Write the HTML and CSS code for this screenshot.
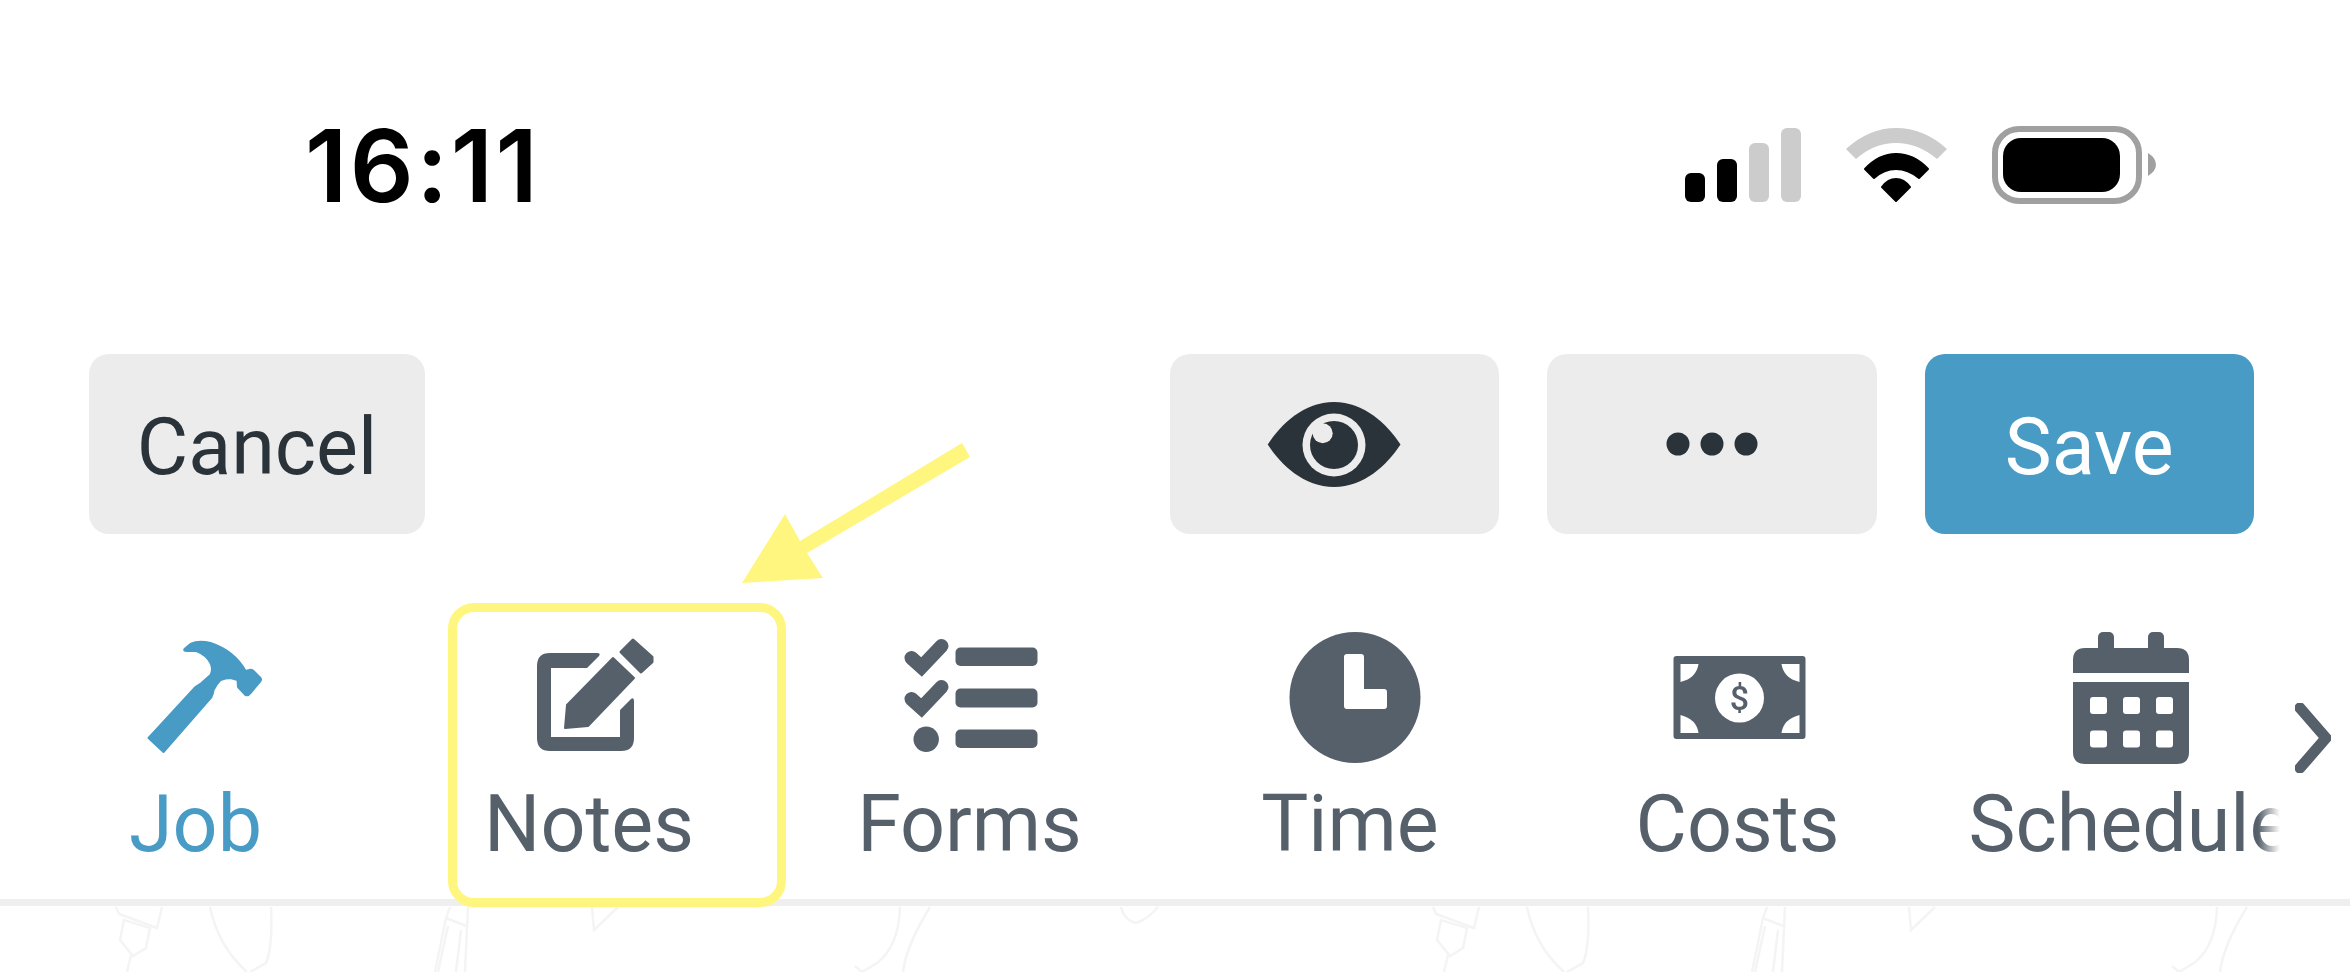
FILE: index.html

```html
<!DOCTYPE html>
<html lang="en">

<head>
    <meta charset="UTF-8">
    <meta name="viewport" content="width=device-width, initial-scale=1.0">
    <title>Job</title>
    <link rel="stylesheet" href="styles.css">
</head>

<body>
    <div id="screen">
        <div class="status">
            <div class="clock">16:11</div>
            <div class="statusIcons">
                <svg width="116" height="76" viewBox="1685 126 116 76">
                    <rect x="1685" y="173" width="20" height="29" rx="6" fill="#000"></rect>
                    <rect x="1717" y="159" width="20" height="43" rx="6" fill="#000"></rect>
                    <rect x="1749" y="143" width="20" height="59" rx="6" fill="#ccc"></rect>
                    <rect x="1781" y="128" width="20" height="74" rx="6" fill="#ccc"></rect>
                </svg>
                <svg width="101" height="76" viewBox="1846 126 101 76">
                    <path d="M1846 149Q1869 128 1896 128Q1924 128 1947 149L1937 159Q1918 143 1896 143Q1874 143 1856 159Z" fill="#ccc"></path>
                    <g fill="#000" stroke="#000" stroke-width="2" stroke-linejoin="round">
                        <path d="M1865 169Q1879 154 1896 154Q1914 154 1928 169L1919 178Q1908 169 1896 169Q1884 169 1874 178Z"></path>
                        <path d="M1882 187Q1888 179 1896 179Q1904 179 1910 187L1896 201Z"></path>
                    </g>
                </svg>
                <svg width="164" height="78" viewBox="1992 126 164 78">
                    <rect x="1995" y="129" width="144" height="72" rx="24" fill="none" stroke="#a0a0a0" stroke-width="6"></rect>
                    <rect x="2003" y="138" width="117" height="54" rx="18" fill="#000"></rect>
                    <path d="M2148 153Q2156 158 2156 164.500Q2156 171 2148 176Z" fill="#a0a0a0"></path>
                </svg>
            </div>
        </div>

        <div class="toolbar">
            <div class="btn btnText btnCancel">Cancel</div>
            <div class="btn">
                <svg width="134" height="85" viewBox="1266 402 134 85">
                    <path fill="#2a3339" d="M1266.700 444.500C1280 424 1303 402 1333 402C1363 402 1386 424 1399.500 444.500C1386 465 1363 487 1333 487C1303 487 1280 465 1266.700 444.500Z"></path>
                    <circle cx="1333" cy="445" r="31.500" fill="#ececec"></circle>
                    <circle cx="1333" cy="445" r="24" fill="#2a3339"></circle>
                    <circle cx="1321.700" cy="433.300" r="10" fill="#ececec"></circle>
                </svg>
            </div>
            <div class="btn">
                <svg width="92" height="24" viewBox="0 0 92 24">
                    <circle cx="12" cy="12" r="11.500" fill="#2a3339"></circle>
                    <circle cx="46" cy="12" r="11.500" fill="#2a3339"></circle>
                    <circle cx="80" cy="12" r="11.500" fill="#2a3339"></circle>
                </svg>
            </div>
            <div class="btn btnText btnSave">Save</div>
        </div>

        <div class="tabBar">
            <div class="tabs">
                <div class="tab active">
                    <svg class="tabIcon" viewBox="95.500 632 200 132">
                        <path fill="#479bc5" stroke="#479bc5" stroke-width="2" stroke-linejoin="round" d="M148 738L163 752L211 697Q213 693 213 690Q216 684 220 680Q225 678 230 678L237 680L237.500 687L245 695Q248 696 250 693L260 681Q261 679.500 260 678L253 671Q251 669.500 249 670L245 671Q234 651 210 643Q198 640 190 644L184 649Q183 651 186 651H196Q206 655 210 663Q213 669 210 675L201 683L195 687Z"></path>
                    </svg>
                    <div class="tabLabel">Job</div>
                </div>
                <div class="tab">
                    <svg class="tabIcon" viewBox="489 632 200 132">
                        <g fill="#56606a">
                            <path d="M550 653H597Q601 653 599 656L587 668H551V737H620V710L631 699Q634 697 634 701V738Q634 751 621 751H550Q537 751 537 738V666Q537 653 550 653Z"></path>
                            <path d="M613 658L634 678L588 726L565 728L567 705Z" stroke="#56606a" stroke-width="2" stroke-linejoin="round"></path>
                            <path d="M633 640L652 657V662L641 672L621 652Z" stroke="#56606a" stroke-width="3" stroke-linejoin="round"></path>
                        </g>
                    </svg>
                    <div class="tabLabel">Notes</div>
                </div>
                <div class="tab">
                    <svg class="tabIcon" viewBox="869.500 632 200 132">
                        <g fill="#56606a">
                            <rect x="955" y="647.500" width="82" height="18.500" rx="5"></rect>
                            <rect x="955" y="688.500" width="82" height="19" rx="5"></rect>
                            <rect x="955" y="729.500" width="82" height="18.500" rx="5"></rect>
                            <circle cx="925.700" cy="739.300" r="12.700"></circle>
                        </g>
                        <g fill="none" stroke="#56606a" stroke-width="14" stroke-linecap="round">
                            <path d="M911 658L921 667L941 646"></path>
                            <path d="M911 699L921 708L941 687"></path>
                        </g>
                    </svg>
                    <div class="tabLabel">Forms</div>
                </div>
                <div class="tab">
                    <svg class="tabIcon" viewBox="1250 632 200 132">
                        <circle cx="1355" cy="697.500" r="65.500" fill="#56606a"></circle>
                        <path d="M1347 657h14v35h23v14h-37z" fill="#fff" stroke="#fff" stroke-width="6" stroke-linejoin="round"></path>
                    </svg>
                    <div class="tabLabel">Time</div>
                </div>
                <div class="tab">
                    <svg class="tabIcon" viewBox="1637.500 632 200 132">
                        <rect x="1673" y="656" width="132" height="83" rx="3" fill="#56606a"></rect>
                        <g fill="#fff">
                            <path d="M1680 664h18q-2 14-18 18z"></path>
                            <path d="M1799 664h-18q2 14 18 18z"></path>
                            <path d="M1680 733h18q-2-14-18-18z"></path>
                            <path d="M1799 733h-18q2-14 18-18z"></path>
                            <circle cx="1739" cy="698" r="24.500"></circle>
                        </g>
                        <text class="dollar" x="1739" y="710" text-anchor="middle">$</text>
                    </svg>
                    <div class="tabLabel">Costs</div>
                </div>
                <div class="tab">
                    <svg class="tabIcon" viewBox="2030 632 200 132">
                        <g fill="#56606a">
                            <rect x="2098" y="632" width="16" height="24" rx="5"></rect>
                            <rect x="2148" y="632" width="16" height="24" rx="5"></rect>
                            <path d="M2073 673v-13q0-12 12-12h92q12 0 12 12v13z"></path>
                            <path d="M2073 682h116v70q0 12-12 12h-92q-12 0-12-12z"></path>
                        </g>
                        <g fill="#fff">
                            <rect x="2090" y="697" width="17" height="17" rx="3"></rect>
                            <rect x="2123" y="697" width="17" height="17" rx="3"></rect>
                            <rect x="2156" y="697" width="17" height="17" rx="3"></rect>
                            <rect x="2090" y="730.500" width="17" height="17" rx="3"></rect>
                            <rect x="2123" y="730.500" width="17" height="17" rx="3"></rect>
                            <rect x="2156" y="730.500" width="17" height="17" rx="3"></rect>
                        </g>
                    </svg>
                    <div class="tabLabel">Schedule</div>
                </div>
            </div>
            <svg class="chevron" width="36" height="70" viewBox="2295 703 36 70">
                <path d="M2300 708L2326 738L2300 768" fill="none" stroke="#56606a" stroke-width="11" stroke-linecap="round" stroke-linejoin="round"></path>
            </svg>
        </div>

        <div class="doodles">
            <svg width="1317" height="66" viewBox="0 0 1317 66">
                <g id="doodle" fill="none" stroke="#f4f4f4" stroke-width="2.500">
                    <path d="M116 1L119 8L157 22L162 1"></path>
                    <path d="M124 14L120 34L133 50L146 42L150 22Z"></path>
                    <path d="M131 49L127 66"></path>
                    <path d="M210 1Q218 40 247 66"></path>
                    <path d="M271 1Q273 40 266 57L250 66"></path>
                    <path d="M450 1L446 12L435 66"></path>
                    <path d="M468 1L465 66"></path>
                    <path d="M446 12L466 20"></path>
                    <path d="M448 20L438 66"></path>
                    <path d="M461 24L456 66"></path>
                    <path d="M592 1L594 24L618 1"></path>
                    <path d="M900 1Q899 40 877 57L862 66L855 60"></path>
                    <path d="M930 1Q906 40 903 66"></path>
                    <path d="M1121 1Q1124 14 1136 17Q1148 13 1158 1"></path>
                </g>
            </svg>
            <svg width="1033" height="66" viewBox="0 0 1033 66">
                <use href="#doodle"></use>
            </svg>
        </div>

        <div class="highlight"></div>
        <svg class="arrow" width="228" height="140" viewBox="742 443 228 140">
            <polygon points="962,443 970,457 807,553 823,578 742,583 785,514 800,541" fill="#fff67f"></polygon>
        </svg>
    </div>
</body>

</html>
```

FILE: styles.css

```css
html,
body {
    margin: 0;
    padding: 0;
    background-color: #fff;
}

#screen {
    position: relative;
    width: 2350px;
    height: 972px;
    overflow: hidden;
    font-family: Roboto, "Liberation Sans", sans-serif;
    filter: blur(0.7px);
}

.status {
    display: flex;
    justify-content: space-between;
    align-items: flex-start;
    box-sizing: border-box;
    height: 354px;
    padding: 126px 194px 0 305px;
}

.clock {
    font-family: Inter, "Liberation Sans", sans-serif;
    font-size: 100px;
    font-weight: 600;
    line-height: 80px;
    letter-spacing: 2.5px;
    color: #000;
}

.statusIcons {
    display: flex;
    align-items: flex-start;
    gap: 45px;
}

.toolbar {
    display: flex;
    gap: 48px;
    padding: 0 96px 0 89px;
}

.btn {
    display: flex;
    justify-content: center;
    align-items: center;
    box-sizing: border-box;
    width: 329.5px;
    height: 180px;
    border-radius: 20px;
    background-color: #ececec;
    color: #2a3339;
}

.btnText {
    padding-top: 6px;
    font-size: 79px;
}

.btnCancel {
    width: 336px;
    margin-right: auto;
}

.btnSave {
    background-color: #479bc5;
    color: #fff;
}

.tabBar {
    display: flex;
    box-sizing: border-box;
    height: 372px;
    padding-top: 98px;
    border-bottom: 7px solid #efefef;
}

.tabs {
    display: grid;
    grid-template-columns: 391px 396px 365px 396px 379px 406px;
    flex: 0 0 2280px;
    overflow: hidden;
    -webkit-mask-image: linear-gradient(to right, #000 2258px, transparent 2280px);
    mask-image: linear-gradient(to right, #000 2258px, transparent 2280px);
}

.tab {
    display: flex;
    flex-direction: column;
    align-items: center;
}

.tabIcon {
    display: block;
    width: 200px;
    height: 132px;
}

.tabLabel {
    margin-top: 15px;
    font-size: 79px;
    line-height: 90px;
    white-space: nowrap;
    color: #56606a;
}

.active .tabLabel {
    color: #479bc5;
}

.dollar {
    font-family: Roboto, sans-serif;
    font-size: 34px;
    font-weight: 500;
    fill: #56606a;
}

.chevron {
    flex: none;
    margin: 71px 0 0 15px;
}

.doodles {
    display: flex;
    height: 66px;
}

.doodles svg {
    flex: none;
    display: block;
}

.highlight {
    position: absolute;
    left: 448px;
    top: 603px;
    box-sizing: border-box;
    width: 338px;
    height: 304px;
    border: 9px solid #fff67f;
    border-radius: 26px;
}

.arrow {
    position: absolute;
    left: 742px;
    top: 443px;
}
```
